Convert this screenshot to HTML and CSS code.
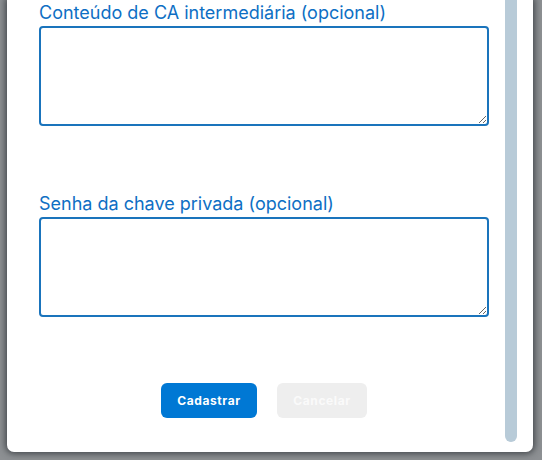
FILE: index.html
```html
<!DOCTYPE html>
<html lang="pt">
<head>
<meta charset="utf-8">
<link rel="stylesheet" href="styles.css">
</head>
<body>
<div class="modal">
  <div class="content">
    <div class="field">
      <label class="label">Conteúdo de CA intermediária (opcional)</label>
      <textarea class="input"></textarea>
    </div>
    <div class="field second">
      <label class="label">Senha da chave privada (opcional)</label>
      <textarea class="input"></textarea>
    </div>
    <div class="actions">
      <button class="btn primary">Cadastrar</button>
      <button class="btn disabled">Cancelar</button>
    </div>
  </div>
  <div class="scrollbar"></div>
</div>
</body>
</html>
```

FILE: styles.css
```css
html, body {
  margin: 0;
  padding: 0;
  height: 100%;
}
body {
  background: #8d9093;
  font-family: Inter, "Noto Sans", sans-serif;
  overflow: hidden;
}
.modal {
  display: flex;
  height: 452px;
  margin: 0 9px 0 7px;
  background: #fff;
  border-radius: 0 0 7px 7px;
  box-shadow: 0 0 6px 2px rgba(40, 44, 48, 0.7);
}
.content {
  flex: 1;
  padding-left: 32px;
  padding-top: 2px;
  display: flex;
  flex-direction: column;
}
.field {
  display: flex;
  flex-direction: column;
}
.field.second {
  margin-top: 67px;
}
.label {
  font-size: 18px;
  line-height: 22px;
  color: #0e6fc4;
  margin-bottom: 2px;
}
.input {
  box-sizing: border-box;
  width: 450px;
  height: 100px;
  border: 2px solid #1a74bc;
  border-radius: 4px;
  background: #fff;
  margin: 0;
  resize: both;
}
.actions {
  display: flex;
  justify-content: center;
  gap: 20px;
  margin-top: 66px;
  width: 450px;
}
.btn {
  height: 35px;
  border: none;
  border-radius: 6px;
  font-family: Inter, "Noto Sans", sans-serif;
  font-weight: 700;
  font-size: 12px;
  letter-spacing: 0.6px;
  padding: 0;
}
.primary {
  width: 96px;
  background: #0078d4;
  color: #fff;
}
.disabled {
  width: 90px;
  background: #eeeeee;
  color: #fafafa;
}
.scrollbar {
  width: 12px;
  height: 442px;
  margin: 0 16px 0 16px;
  background: #b8cbd8;
  border-radius: 0 0 6px 6px;
}
```
